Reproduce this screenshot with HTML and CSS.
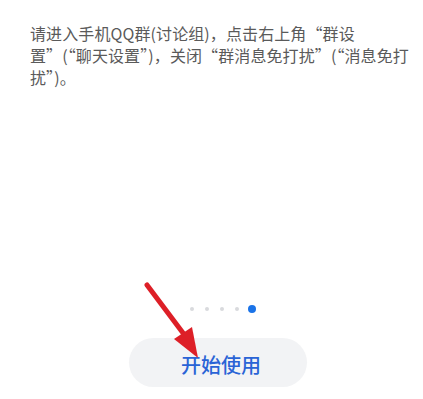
FILE: index.html
```html
<!DOCTYPE html>
<html lang="zh-CN">
<head>
<meta charset="utf-8">
<link rel="stylesheet" href="styles.css">
</head>
<body>
<div class="page">
  <p class="desc">请进入手机QQ群(讨论组)，点击右上角“群设<br>置”(“聊天设置”)，关闭“群消息免打扰”(“消息免打<br>扰”)。</p>
  <div class="bottom">
    <div class="dots">
      <span class="dot"></span>
      <span class="dot"></span>
      <span class="dot"></span>
      <span class="dot"></span>
      <span class="dot active"></span>
    </div>
    <div class="btn">开始使用</div>
  </div>
  <svg class="arrow" width="70" height="84" viewBox="0 0 70 84">
    <line x1="6" y1="6" x2="42" y2="54" stroke="#dd1f27" stroke-width="5" stroke-linecap="round"/>
    <polygon points="33,60 51,48 57,79" fill="#dd1f27"/>
  </svg>
</div>
</body>
</html>
```
FILE: styles.css
```css
html, body {
  margin: 0;
  padding: 0;
  background: #ffffff;
}
.page {
  position: relative;
  width: 423px;
  height: 399px;
  display: flex;
  flex-direction: column;
  font-family: "Noto Sans CJK SC", "Noto Sans", sans-serif;
}
.desc {
  margin: 0;
  padding: 22px 0 0 30px;
  width: 393px;
  box-sizing: border-box;
  white-space: nowrap;
  font-size: 16px;
  line-height: 22px;
  letter-spacing: 0.1px;
  color: #5a5a5a;
}
.bottom {
  margin-top: auto;
  display: flex;
  flex-direction: column;
  padding-bottom: 12px;
}
.dots {
  display: flex;
  align-items: center;
  gap: 11px;
  margin-left: 190px;
  height: 8px;
  margin-bottom: 25px;
}
.dot {
  width: 4px;
  height: 4px;
  border-radius: 50%;
  background: #d9dadd;
}
.dot.active {
  width: 8px;
  height: 8px;
  margin-left: -2px;
  background: #1a73e8;
}
.btn {
  margin-left: 129px;
  width: 178px;
  height: 49px;
  box-sizing: border-box;
  padding: 4px 0 0 6px;
  border-radius: 25px;
  background: #f2f3f5;
  display: flex;
  align-items: center;
  justify-content: center;
  font-size: 20px;
  font-weight: 500;
  color: #2a64d6;
}
.arrow {
  position: absolute;
  left: 141px;
  top: 279px;
}
```
